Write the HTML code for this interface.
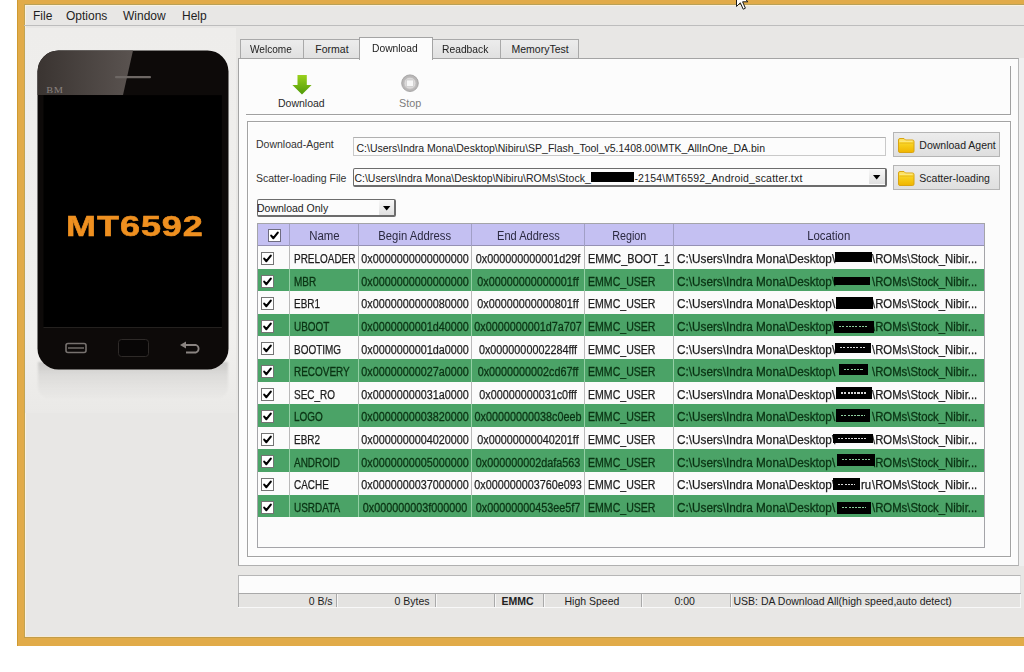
<!DOCTYPE html>
<html><head><meta charset="utf-8">
<style>
*{margin:0;padding:0;box-sizing:border-box}
html,body{width:1024px;height:672px;overflow:hidden;background:#fff;font-family:"Liberation Sans",sans-serif;color:#222}
.a{position:absolute}
.t{position:absolute;white-space:nowrap;line-height:1}
#frame{left:17px;top:0;width:1100px;height:646px;background:#e1ab49;border-left:1px solid #cf9a30}
#win{left:24px;top:4px;width:1001px;height:634px;background:#e8e7e5;border-top:1px solid #b9a158;border-left:1px solid #c2a453;box-shadow:inset 1px 1px 0 #fbf1df}
.menu{font-size:12px;top:10px;color:#1e1e1e}
.tab{top:39px;height:20px;background:linear-gradient(#ececec,#e0e0e0);border:1px solid #a9a9a9;border-bottom:none}
.tabt{font-size:10.5px;top:44px;color:#222;transform-origin:0 0}
.hd{font-size:12px;color:#2b2940;text-align:center;transform-origin:50% 0}
.w{font-size:12px;color:#1c1c1c;transform-origin:0 0;-webkit-text-stroke:0.25px #1c1c1c}
.g{font-size:12px;color:#0a3313;transform-origin:0 0;-webkit-text-stroke:0.3px #0a3313}
.c{text-align:center;transform-origin:50% 0}
.cb{position:absolute;width:12px;height:12px;background:#fff;border:1px solid #707070}
.cb::after{content:"";position:absolute;left:2.5px;top:0px;width:4px;height:7px;border:solid #000;border-width:0 2px 2px 0;transform:rotate(40deg)}
.st{font-size:10.5px;top:596px;color:#222}
</style></head><body>
<div id="frame" class="a"></div>
<div id="win" class="a"></div>
<div class="a" style="left:25px;top:636px;width:1000px;height:1px;background:#f6ead6"></div>
<div class="a" style="left:24px;top:637px;width:1000px;height:1.2px;background:#c39d48"></div>
<!-- menu -->
<div class="a" style="left:24px;top:25px;width:1000px;height:1px;background:#bdbdbd"></div>
<div class="t menu" style="left:33px">File</div>
<div class="t menu" style="left:66px">Options</div>
<div class="t menu" style="left:123px">Window</div>
<div class="t menu" style="left:182px">Help</div>


<!-- phone -->
<div class="a" style="left:25px;top:28px;width:211px;height:385px;background:linear-gradient(#eeedeb,#f1f0ee 80%,#eae9e7)"></div>
<svg class="a" style="left:24px;top:40px" width="215" height="370" viewBox="24 40 215 370">
 <defs>
  <linearGradient id="gl" x1="0" y1="0" x2="1" y2="0">
   <stop offset="0" stop-color="#3a3431"/><stop offset="1" stop-color="#5a5350"/>
  </linearGradient>
  <linearGradient id="sh" x1="0" y1="0" x2="0" y2="1">
   <stop offset="0" stop-color="#d8d7d5"/><stop offset="1" stop-color="#efeeec" stop-opacity="0"/>
  </linearGradient>
 </defs>
 <linearGradient id="sg" x1="0" y1="0" x2="0" y2="1"><stop offset="0" stop-color="#000" stop-opacity="0.16"/><stop offset="0.35" stop-color="#000" stop-opacity="0.07"/><stop offset="1" stop-color="#000" stop-opacity="0"/></linearGradient>
 <filter id="bl" x="-20%" y="-50%" width="140%" height="200%"><feGaussianBlur stdDeviation="1.2"/></filter>
 <path d="M38 362 H228 V384 Q228 400 212 400 H54 Q38 400 38 384 Z" fill="url(#sg)" filter="url(#bl)"/>
 <rect x="37.5" y="50.5" width="191" height="319" rx="21" ry="21" fill="#0d0a09"/>
 <path d="M58.5 50.5 H133 L123 95 H37.5 V71.5 A21 21 0 0 1 58.5 50.5 Z" fill="url(#gl)"/>
 <rect x="43.5" y="95.2" width="178.3" height="232" fill="#000"/>
 <rect x="43.5" y="327.2" width="178.3" height="0.8" fill="#2b2826"/>
 <rect x="115" y="76" width="36" height="2.2" rx="1" fill="#6d6764"/>
 <text x="46.3" y="93.4" font-family="Liberation Serif" font-size="9" fill="#8a8380" letter-spacing="0.4" textLength="17" lengthAdjust="spacingAndGlyphs">BM</text>
 <rect x="66" y="343.5" width="20" height="9" rx="2" fill="none" stroke="#77726f" stroke-width="1.6"/>
 <line x1="68" y1="348" x2="84" y2="348" stroke="#77726f" stroke-width="1.4"/>
 <rect x="118.5" y="339.5" width="30" height="17" rx="3" fill="#080606" stroke="#2e2a28" stroke-width="1"/>
 <path d="M185 345 H196 A4 4 0 0 1 196 352.5 H186" fill="none" stroke="#8a8481" stroke-width="1.8"/>
 <path d="M180 345 L186 341.5 L186 348.5 Z" fill="#8a8481"/>
</svg>
<div class="t" style="left:66px;top:211px;font-size:30px;font-weight:bold;color:#ef9020;letter-spacing:0.8px;transform:scaleX(1.2);transform-origin:0 0;-webkit-text-stroke:0.6px #ef9020">MT6592</div>

<!-- tabs -->
<div class="a tab" style="left:240px;width:64px"></div>
<div class="a tab" style="left:303px;width:57px"></div>
<div class="a tab" style="left:432px;width:69px"></div>
<div class="a tab" style="left:500px;width:79px"></div>
<div class="t tabt" style="left:249.5px;transform:scaleX(0.96)">Welcome</div>
<div class="t tabt" style="left:315.3px;transform:scaleX(1)">Format</div>
<div class="t tabt" style="left:442px;transform:scaleX(0.98)">Readback</div>
<div class="t tabt" style="left:511.5px;transform:scaleX(1)">MemoryTest</div>

<!-- pane -->
<div class="a" style="left:1018px;top:58px;width:6px;height:508px;background:#efefef"></div><div class="a" style="left:238px;top:58px;width:780.5px;height:508px;background:#fcfcfc;border:1px solid #a4a4a4;border-right-color:#b8b8b8;border-bottom-color:#b0b0b0"></div>
<div class="a" style="left:359px;top:37px;width:74px;height:23px;background:#fcfcfc;border:1px solid #a4a4a4;border-bottom:none"></div>
<div class="t tabt" style="left:372.2px;top:43px;transform:scaleX(0.98)">Download</div>


<!-- toolbar -->
<div class="a" style="left:246px;top:114px;width:765px;height:1px;background:#a0a0a0"></div>
<div class="a" style="left:246px;top:115px;width:765px;height:1px;background:#fff"></div>
<div class="a" style="left:1010px;top:66px;width:1px;height:49px;background:#a0a0a0"></div>
<svg class="a" style="left:288px;top:70px" width="30" height="28" viewBox="288 70 30 28">
 <defs><linearGradient id="ga" x1="0" y1="0" x2="0" y2="1"><stop offset="0" stop-color="#9ad11c"/><stop offset="1" stop-color="#4f9a08"/></linearGradient></defs>
 <path d="M297.5 75 H306.8 V85 H311.6 L302 94.5 L292.4 85 H297.5 Z" fill="url(#ga)"/>
</svg>
<div class="t" style="left:278px;top:98px;font-size:10.5px;color:#2a2a2a">Download</div>
<svg class="a" style="left:398px;top:72px" width="24" height="24" viewBox="398 72 24 24">
 <circle cx="410" cy="83.2" r="8.3" fill="#b9b7b7" stroke="#a3a1a1" stroke-width="0.9"/>
 <circle cx="410" cy="83.2" r="6" fill="#dcdada" stroke="#bebcbc" stroke-width="0.8"/>
 <rect x="406.4" y="80" width="7.2" height="6.4" fill="#f7f7f7" stroke="#c4c4c4" stroke-width="0.6"/>
</svg>
<div class="t" style="left:399px;top:98px;font-size:10.8px;color:#7c7c7c">Stop</div>

<!-- groupbox -->
<div class="a" style="left:247px;top:121px;width:764px;height:436px;border:1px solid #a3a3a3;box-shadow:inset 1px 1px 0 #fff, 1px 1px 0 #fff"></div>
<div class="t" style="left:256px;top:139px;font-size:10.5px;color:#333">Download-Agent</div>
<div class="a" style="left:353px;top:137px;width:533px;height:19px;background:#fcfcfc;border:1px solid #c9c9c9;border-top-color:#b0b0b0"></div>
<div class="t" style="left:356.5px;top:143px;font-size:10.5px;color:#222">C:\Users\Indra Mona\Desktop\Nibiru\SP_Flash_Tool_v5.1408.00\MTK_AllInOne_DA.bin</div>
<div class="t" style="left:256px;top:173px;font-size:10.5px;color:#333">Scatter-loading File</div>
<div class="a" style="left:353px;top:168px;width:534px;height:18.5px;background:#fcfcfc;border:1px solid #6c6c6c;border-right-width:2px;border-bottom-width:2px;border-radius:2px"></div>
<div class="t" style="left:354.4px;top:173px;font-size:10.5px;color:#222">C:\Users\Indra Mona\Desktop\Nibiru\ROMs\Stock_</div><div class="a" style="left:591.3px;top:172.2px;width:43px;height:10px;background:#000"></div><div class="t" style="left:634.4px;top:173px;font-size:10.5px;color:#222;letter-spacing:0.22px">-2154\MT6592_Android_scatter.txt</div>
<div class="a" style="left:869px;top:169px;width:16px;height:15px;background:linear-gradient(#f8f8f8,#e0e0e0)"></div>
<svg class="a" style="left:873px;top:175px" width="8" height="5"><path d="M0 0H7.4L3.7 4.4Z" fill="#000"/></svg>

<div class="a" style="left:257px;top:199px;width:138.5px;height:17.5px;background:#fcfcfc;border:1px solid #6c6c6c;border-right-width:2px;border-bottom-width:2px;border-radius:2px"></div>
<div class="t" style="left:257px;top:203px;font-size:10.5px;color:#222">Download Only</div>
<div class="a" style="left:379px;top:200px;width:15px;height:15px;background:linear-gradient(#f8f8f8,#e0e0e0)"></div>
<svg class="a" style="left:382.5px;top:206px" width="8" height="5"><path d="M0 0H7.4L3.7 4.4Z" fill="#000"/></svg>

<div class="a" style="left:893px;top:132px;width:107px;height:25px;background:linear-gradient(#ececec,#dfdfdf);border:1px solid #b5b5b5"></div>
<div class="t" style="left:919.3px;top:140px;font-size:10.5px;color:#222">Download Agent</div>
<div class="a" style="left:893px;top:165px;width:107px;height:25px;background:linear-gradient(#ececec,#dfdfdf);border:1px solid #b5b5b5"></div>
<div class="t" style="left:919.3px;top:173px;font-size:10.5px;color:#222">Scatter-loading</div>
<svg class="a" style="left:897px;top:136.5px" width="19" height="17" viewBox="0 0 19 17"><defs><linearGradient id="fd" x1="0" y1="0" x2="0" y2="1"><stop offset="0" stop-color="#fde46a"/><stop offset="0.45" stop-color="#f7cf1c"/><stop offset="1" stop-color="#f0b400"/></linearGradient></defs><path d="M1.5 3 Q1.5 1.5 3 1.5 H7 L8.5 3 H15.5 Q17 3 17 4.5 V14 Q17 15.5 15.5 15.5 H3 Q1.5 15.5 1.5 14 Z" fill="url(#fd)" stroke="#d9a412" stroke-width="1"/><path d="M2.5 6.2 H16" stroke="#e8b818" stroke-width="0.8"/><path d="M2.5 4.2 H15.5" stroke="#fff2a8" stroke-width="1" opacity="0.8"/></svg>
<svg class="a" style="left:897px;top:170px" width="19" height="17" viewBox="0 0 19 17"><path d="M1.5 3 Q1.5 1.5 3 1.5 H7 L8.5 3 H15.5 Q17 3 17 4.5 V14 Q17 15.5 15.5 15.5 H3 Q1.5 15.5 1.5 14 Z" fill="url(#fd)" stroke="#d9a412" stroke-width="1"/><path d="M2.5 6.2 H16" stroke="#e8b818" stroke-width="0.8"/><path d="M2.5 4.2 H15.5" stroke="#fff2a8" stroke-width="1" opacity="0.8"/></svg>

<!-- table -->
<div class="a" style="left:257px;top:223px;width:728px;height:325px;background:#fbfbfb;border:1px solid #a4a4a8"></div>
<div class="a" style="left:258px;top:224px;width:726px;height:22px;background:#c4c0f2"></div>
<div class="a" style="left:258px;top:245px;width:726px;height:1.5px;background:#9591b4"></div>
<div class="a" style="left:289.0px;top:224px;width:1px;height:22px;background:#a19fc6"></div>
<div class="a" style="left:357.8px;top:224px;width:1px;height:22px;background:#a19fc6"></div>
<div class="a" style="left:471.2px;top:224px;width:1px;height:22px;background:#a19fc6"></div>
<div class="a" style="left:584.0px;top:224px;width:1px;height:22px;background:#a19fc6"></div>
<div class="a" style="left:672.5px;top:224px;width:1px;height:22px;background:#a19fc6"></div>
<svg class="a" style="left:267.5px;top:229px" width="13" height="13" viewBox="0 0 13 13"><rect x="0.5" y="0.5" width="12" height="12" fill="#fff" stroke="#6e6c80"/><path d="M3.2 6.6 L5.4 9.2 L9.8 3.6" fill="none" stroke="#000" stroke-width="2.1" stroke-linecap="round" stroke-linejoin="round"/></svg>
<div class="t hd" style="left:289.5px;width:68.8px;top:229.54px;transform:scaleX(0.95)">Name</div>
<div class="t hd" style="left:358.3px;width:113.4px;top:229.54px;transform:scaleX(0.94)">Begin Address</div>
<div class="t hd" style="left:471.7px;width:112.8px;top:229.54px;transform:scaleX(0.92)">End Address</div>
<div class="t hd" style="left:584.5px;width:88.5px;top:229.54px;transform:scaleX(0.9)">Region</div>
<div class="t hd" style="left:673.0px;width:311.4px;top:229.54px;transform:scaleX(0.95)">Location</div>
<div class="a" style="left:258px;top:246.0px;width:726px;height:22.6px;background:#fbfbfb"></div>
<div class="a" style="left:289.0px;top:246.0px;width:1px;height:22.6px;background:#b9b9b9"></div>
<div class="a" style="left:357.8px;top:246.0px;width:1px;height:22.6px;background:#b9b9b9"></div>
<div class="a" style="left:471.2px;top:246.0px;width:1px;height:22.6px;background:#b9b9b9"></div>
<div class="a" style="left:584.0px;top:246.0px;width:1px;height:22.6px;background:#b9b9b9"></div>
<div class="a" style="left:672.5px;top:246.0px;width:1px;height:22.6px;background:#b9b9b9"></div>
<svg class="a" style="left:260.8px;top:252.0px" width="13" height="13" viewBox="0 0 13 13"><rect x="0.5" y="0.5" width="12" height="12" fill="#fff" stroke="#747474"/><path d="M3.2 6.6 L5.4 9.2 L9.8 3.6" fill="none" stroke="#000" stroke-width="2.1" stroke-linecap="round" stroke-linejoin="round"/></svg>
<div class="t w" style="left:293.6px;top:253.14px;transform:scaleX(0.83)">PRELOADER</div>
<div class="t w c" style="left:314.5px;width:200px;top:253.14px;transform:scaleX(0.9)">0x0000000000000000</div>
<div class="t w c" style="left:428.2px;width:200px;top:253.14px;transform:scaleX(0.9)">0x000000000001d29f</div>
<div class="t w" style="left:587.6px;top:253.14px;transform:scaleX(0.905)">EMMC_BOOT_1</div>
<div class="t w" style="left:677.3px;top:253.14px;transform:scaleX(0.98)">C:\Users\Indra Mona\Desktop\</div>
<div class="t w" style="left:871.7px;top:253.14px;transform:scaleX(0.945)">\ROMs\Stock_Nibir...</div>
<div class="a" style="left:835.2px;top:252.0px;width:36.5px;height:10.0px;background:#000"></div>
<div class="a" style="left:258px;top:268.6px;width:726px;height:22.6px;background:#4ba367"></div>
<div class="a" style="left:289.0px;top:268.6px;width:1px;height:22.6px;background:#93cfa4"></div>
<div class="a" style="left:357.8px;top:268.6px;width:1px;height:22.6px;background:#93cfa4"></div>
<div class="a" style="left:471.2px;top:268.6px;width:1px;height:22.6px;background:#93cfa4"></div>
<div class="a" style="left:584.0px;top:268.6px;width:1px;height:22.6px;background:#93cfa4"></div>
<div class="a" style="left:672.5px;top:268.6px;width:1px;height:22.6px;background:#93cfa4"></div>
<svg class="a" style="left:260.8px;top:274.6px" width="13" height="13" viewBox="0 0 13 13"><rect x="0.5" y="0.5" width="12" height="12" fill="#fff" stroke="#747474"/><path d="M3.2 6.6 L5.4 9.2 L9.8 3.6" fill="none" stroke="#000" stroke-width="2.1" stroke-linecap="round" stroke-linejoin="round"/></svg>
<div class="t g" style="left:293.6px;top:275.74px;transform:scaleX(0.83)">MBR</div>
<div class="t g c" style="left:314.5px;width:200px;top:275.74px;transform:scaleX(0.9)">0x0000000000000000</div>
<div class="t g c" style="left:428.2px;width:200px;top:275.74px;transform:scaleX(0.9)">0x00000000000001ff</div>
<div class="t g" style="left:587.6px;top:275.74px;transform:scaleX(0.88)">EMMC_USER</div>
<div class="t g" style="left:677.3px;top:275.74px;transform:scaleX(0.98)">C:\Users\Indra Mona\Desktop\</div>
<div class="t g" style="left:871.7px;top:275.74px;transform:scaleX(0.945)">\ROMs\Stock_Nibir...</div>
<div class="a" style="left:833.8px;top:277.0px;width:35.8px;height:8.4px;background:#000"></div>
<div class="a" style="left:258px;top:291.2px;width:726px;height:22.6px;background:#fbfbfb"></div>
<div class="a" style="left:289.0px;top:291.2px;width:1px;height:22.6px;background:#b9b9b9"></div>
<div class="a" style="left:357.8px;top:291.2px;width:1px;height:22.6px;background:#b9b9b9"></div>
<div class="a" style="left:471.2px;top:291.2px;width:1px;height:22.6px;background:#b9b9b9"></div>
<div class="a" style="left:584.0px;top:291.2px;width:1px;height:22.6px;background:#b9b9b9"></div>
<div class="a" style="left:672.5px;top:291.2px;width:1px;height:22.6px;background:#b9b9b9"></div>
<svg class="a" style="left:260.8px;top:297.2px" width="13" height="13" viewBox="0 0 13 13"><rect x="0.5" y="0.5" width="12" height="12" fill="#fff" stroke="#747474"/><path d="M3.2 6.6 L5.4 9.2 L9.8 3.6" fill="none" stroke="#000" stroke-width="2.1" stroke-linecap="round" stroke-linejoin="round"/></svg>
<div class="t w" style="left:293.6px;top:298.34px;transform:scaleX(0.83)">EBR1</div>
<div class="t w c" style="left:314.5px;width:200px;top:298.34px;transform:scaleX(0.9)">0x0000000000080000</div>
<div class="t w c" style="left:428.2px;width:200px;top:298.34px;transform:scaleX(0.9)">0x00000000000801ff</div>
<div class="t w" style="left:587.6px;top:298.34px;transform:scaleX(0.88)">EMMC_USER</div>
<div class="t w" style="left:677.3px;top:298.34px;transform:scaleX(0.98)">C:\Users\Indra Mona\Desktop\</div>
<div class="t w" style="left:871.7px;top:298.34px;transform:scaleX(0.945)">\ROMs\Stock_Nibir...</div>
<div class="a" style="left:836.3px;top:296.7px;width:36.4px;height:12.1px;background:#000"></div>
<div class="a" style="left:258px;top:313.8px;width:726px;height:22.6px;background:#4ba367"></div>
<div class="a" style="left:289.0px;top:313.8px;width:1px;height:22.6px;background:#93cfa4"></div>
<div class="a" style="left:357.8px;top:313.8px;width:1px;height:22.6px;background:#93cfa4"></div>
<div class="a" style="left:471.2px;top:313.8px;width:1px;height:22.6px;background:#93cfa4"></div>
<div class="a" style="left:584.0px;top:313.8px;width:1px;height:22.6px;background:#93cfa4"></div>
<div class="a" style="left:672.5px;top:313.8px;width:1px;height:22.6px;background:#93cfa4"></div>
<svg class="a" style="left:260.8px;top:319.8px" width="13" height="13" viewBox="0 0 13 13"><rect x="0.5" y="0.5" width="12" height="12" fill="#fff" stroke="#747474"/><path d="M3.2 6.6 L5.4 9.2 L9.8 3.6" fill="none" stroke="#000" stroke-width="2.1" stroke-linecap="round" stroke-linejoin="round"/></svg>
<div class="t g" style="left:293.6px;top:320.94px;transform:scaleX(0.83)">UBOOT</div>
<div class="t g c" style="left:314.5px;width:200px;top:320.94px;transform:scaleX(0.9)">0x0000000001d40000</div>
<div class="t g c" style="left:428.2px;width:200px;top:320.94px;transform:scaleX(0.9)">0x0000000001d7a707</div>
<div class="t g" style="left:587.6px;top:320.94px;transform:scaleX(0.88)">EMMC_USER</div>
<div class="t g" style="left:677.3px;top:320.94px;transform:scaleX(0.98)">C:\Users\Indra Mona\Desktop\</div>
<div class="t g" style="left:871.7px;top:320.94px;transform:scaleX(0.945)">\ROMs\Stock_Nibir...</div>
<div class="a" style="left:834.2px;top:320.8px;width:40.0px;height:11.9px;background:#000"></div>
<div class="a" style="left:839.2px;top:326.1px;width:30.0px;height:1.2px;background:repeating-linear-gradient(90deg,#8fcf9f 0 2px,transparent 2px 3.3px)"></div>
<div class="a" style="left:258px;top:336.4px;width:726px;height:22.6px;background:#fbfbfb"></div>
<div class="a" style="left:289.0px;top:336.4px;width:1px;height:22.6px;background:#b9b9b9"></div>
<div class="a" style="left:357.8px;top:336.4px;width:1px;height:22.6px;background:#b9b9b9"></div>
<div class="a" style="left:471.2px;top:336.4px;width:1px;height:22.6px;background:#b9b9b9"></div>
<div class="a" style="left:584.0px;top:336.4px;width:1px;height:22.6px;background:#b9b9b9"></div>
<div class="a" style="left:672.5px;top:336.4px;width:1px;height:22.6px;background:#b9b9b9"></div>
<svg class="a" style="left:260.8px;top:342.4px" width="13" height="13" viewBox="0 0 13 13"><rect x="0.5" y="0.5" width="12" height="12" fill="#fff" stroke="#747474"/><path d="M3.2 6.6 L5.4 9.2 L9.8 3.6" fill="none" stroke="#000" stroke-width="2.1" stroke-linecap="round" stroke-linejoin="round"/></svg>
<div class="t w" style="left:293.6px;top:343.54px;transform:scaleX(0.83)">BOOTIMG</div>
<div class="t w c" style="left:314.5px;width:200px;top:343.54px;transform:scaleX(0.9)">0x0000000001da0000</div>
<div class="t w c" style="left:428.2px;width:200px;top:343.54px;transform:scaleX(0.9)">0x0000000002284fff</div>
<div class="t w" style="left:587.6px;top:343.54px;transform:scaleX(0.88)">EMMC_USER</div>
<div class="t w" style="left:677.3px;top:343.54px;transform:scaleX(0.98)">C:\Users\Indra Mona\Desktop\</div>
<div class="t w" style="left:871.7px;top:343.54px;transform:scaleX(0.945)">\ROMs\Stock_Nibir...</div>
<div class="a" style="left:834.6px;top:342.5px;width:36.0px;height:10.0px;background:#000"></div>
<div class="a" style="left:839.6px;top:346.9px;width:26.0px;height:1.2px;background:repeating-linear-gradient(90deg,#d8d8d8 0 2px,transparent 2px 3.3px)"></div>
<div class="a" style="left:258px;top:359.0px;width:726px;height:22.6px;background:#4ba367"></div>
<div class="a" style="left:289.0px;top:359.0px;width:1px;height:22.6px;background:#93cfa4"></div>
<div class="a" style="left:357.8px;top:359.0px;width:1px;height:22.6px;background:#93cfa4"></div>
<div class="a" style="left:471.2px;top:359.0px;width:1px;height:22.6px;background:#93cfa4"></div>
<div class="a" style="left:584.0px;top:359.0px;width:1px;height:22.6px;background:#93cfa4"></div>
<div class="a" style="left:672.5px;top:359.0px;width:1px;height:22.6px;background:#93cfa4"></div>
<svg class="a" style="left:260.8px;top:365.0px" width="13" height="13" viewBox="0 0 13 13"><rect x="0.5" y="0.5" width="12" height="12" fill="#fff" stroke="#747474"/><path d="M3.2 6.6 L5.4 9.2 L9.8 3.6" fill="none" stroke="#000" stroke-width="2.1" stroke-linecap="round" stroke-linejoin="round"/></svg>
<div class="t g" style="left:293.6px;top:366.14px;transform:scaleX(0.83)">RECOVERY</div>
<div class="t g c" style="left:314.5px;width:200px;top:366.14px;transform:scaleX(0.9)">0x00000000027a0000</div>
<div class="t g c" style="left:428.2px;width:200px;top:366.14px;transform:scaleX(0.9)">0x0000000002cd67ff</div>
<div class="t g" style="left:587.6px;top:366.14px;transform:scaleX(0.88)">EMMC_USER</div>
<div class="t g" style="left:677.3px;top:366.14px;transform:scaleX(0.98)">C:\Users\Indra Mona\Desktop\</div>
<div class="t g" style="left:871.7px;top:366.14px;transform:scaleX(0.945)">\ROMs\Stock_Nibir...</div>
<div class="a" style="left:838.8px;top:364.0px;width:29.7px;height:11.4px;background:#000"></div>
<div class="a" style="left:843.8px;top:369.1px;width:19.7px;height:1.2px;background:repeating-linear-gradient(90deg,#8fcf9f 0 2px,transparent 2px 3.3px)"></div>
<div class="a" style="left:258px;top:381.6px;width:726px;height:22.6px;background:#fbfbfb"></div>
<div class="a" style="left:289.0px;top:381.6px;width:1px;height:22.6px;background:#b9b9b9"></div>
<div class="a" style="left:357.8px;top:381.6px;width:1px;height:22.6px;background:#b9b9b9"></div>
<div class="a" style="left:471.2px;top:381.6px;width:1px;height:22.6px;background:#b9b9b9"></div>
<div class="a" style="left:584.0px;top:381.6px;width:1px;height:22.6px;background:#b9b9b9"></div>
<div class="a" style="left:672.5px;top:381.6px;width:1px;height:22.6px;background:#b9b9b9"></div>
<svg class="a" style="left:260.8px;top:387.6px" width="13" height="13" viewBox="0 0 13 13"><rect x="0.5" y="0.5" width="12" height="12" fill="#fff" stroke="#747474"/><path d="M3.2 6.6 L5.4 9.2 L9.8 3.6" fill="none" stroke="#000" stroke-width="2.1" stroke-linecap="round" stroke-linejoin="round"/></svg>
<div class="t w" style="left:293.6px;top:388.74px;transform:scaleX(0.83)">SEC_RO</div>
<div class="t w c" style="left:314.5px;width:200px;top:388.74px;transform:scaleX(0.9)">0x00000000031a0000</div>
<div class="t w c" style="left:428.2px;width:200px;top:388.74px;transform:scaleX(0.9)">0x00000000031c0fff</div>
<div class="t w" style="left:587.6px;top:388.74px;transform:scaleX(0.88)">EMMC_USER</div>
<div class="t w" style="left:677.3px;top:388.74px;transform:scaleX(0.98)">C:\Users\Indra Mona\Desktop\</div>
<div class="t w" style="left:871.7px;top:388.74px;transform:scaleX(0.945)">\ROMs\Stock_Nibir...</div>
<div class="a" style="left:836.3px;top:387.3px;width:35.7px;height:11.5px;background:#000"></div>
<div class="a" style="left:841.3px;top:392.4px;width:25.7px;height:1.2px;background:repeating-linear-gradient(90deg,#d8d8d8 0 2px,transparent 2px 3.3px)"></div>
<div class="a" style="left:258px;top:404.2px;width:726px;height:22.6px;background:#4ba367"></div>
<div class="a" style="left:289.0px;top:404.2px;width:1px;height:22.6px;background:#93cfa4"></div>
<div class="a" style="left:357.8px;top:404.2px;width:1px;height:22.6px;background:#93cfa4"></div>
<div class="a" style="left:471.2px;top:404.2px;width:1px;height:22.6px;background:#93cfa4"></div>
<div class="a" style="left:584.0px;top:404.2px;width:1px;height:22.6px;background:#93cfa4"></div>
<div class="a" style="left:672.5px;top:404.2px;width:1px;height:22.6px;background:#93cfa4"></div>
<svg class="a" style="left:260.8px;top:410.2px" width="13" height="13" viewBox="0 0 13 13"><rect x="0.5" y="0.5" width="12" height="12" fill="#fff" stroke="#747474"/><path d="M3.2 6.6 L5.4 9.2 L9.8 3.6" fill="none" stroke="#000" stroke-width="2.1" stroke-linecap="round" stroke-linejoin="round"/></svg>
<div class="t g" style="left:293.6px;top:411.34px;transform:scaleX(0.83)">LOGO</div>
<div class="t g c" style="left:314.5px;width:200px;top:411.34px;transform:scaleX(0.9)">0x0000000003820000</div>
<div class="t g c" style="left:428.2px;width:200px;top:411.34px;transform:scaleX(0.9)">0x00000000038c0eeb</div>
<div class="t g" style="left:587.6px;top:411.34px;transform:scaleX(0.88)">EMMC_USER</div>
<div class="t g" style="left:677.3px;top:411.34px;transform:scaleX(0.98)">C:\Users\Indra Mona\Desktop\</div>
<div class="t g" style="left:871.7px;top:411.34px;transform:scaleX(0.945)">\ROMs\Stock_Nibir...</div>
<div class="a" style="left:836.3px;top:409.2px;width:33.7px;height:12.5px;background:#000"></div>
<div class="a" style="left:841.3px;top:414.8px;width:23.7px;height:1.2px;background:repeating-linear-gradient(90deg,#8fcf9f 0 2px,transparent 2px 3.3px)"></div>
<div class="a" style="left:258px;top:426.8px;width:726px;height:22.6px;background:#fbfbfb"></div>
<div class="a" style="left:289.0px;top:426.8px;width:1px;height:22.6px;background:#b9b9b9"></div>
<div class="a" style="left:357.8px;top:426.8px;width:1px;height:22.6px;background:#b9b9b9"></div>
<div class="a" style="left:471.2px;top:426.8px;width:1px;height:22.6px;background:#b9b9b9"></div>
<div class="a" style="left:584.0px;top:426.8px;width:1px;height:22.6px;background:#b9b9b9"></div>
<div class="a" style="left:672.5px;top:426.8px;width:1px;height:22.6px;background:#b9b9b9"></div>
<svg class="a" style="left:260.8px;top:432.8px" width="13" height="13" viewBox="0 0 13 13"><rect x="0.5" y="0.5" width="12" height="12" fill="#fff" stroke="#747474"/><path d="M3.2 6.6 L5.4 9.2 L9.8 3.6" fill="none" stroke="#000" stroke-width="2.1" stroke-linecap="round" stroke-linejoin="round"/></svg>
<div class="t w" style="left:293.6px;top:433.94px;transform:scaleX(0.83)">EBR2</div>
<div class="t w c" style="left:314.5px;width:200px;top:433.94px;transform:scaleX(0.9)">0x0000000004020000</div>
<div class="t w c" style="left:428.2px;width:200px;top:433.94px;transform:scaleX(0.9)">0x00000000040201ff</div>
<div class="t w" style="left:587.6px;top:433.94px;transform:scaleX(0.88)">EMMC_USER</div>
<div class="t w" style="left:677.3px;top:433.94px;transform:scaleX(0.98)">C:\Users\Indra Mona\Desktop\</div>
<div class="t w" style="left:871.7px;top:433.94px;transform:scaleX(0.945)">\ROMs\Stock_Nibir...</div>
<div class="a" style="left:833.0px;top:434.2px;width:39.7px;height:9.3px;background:#000"></div>
<div class="a" style="left:838.0px;top:438.2px;width:29.7px;height:1.2px;background:repeating-linear-gradient(90deg,#d8d8d8 0 2px,transparent 2px 3.3px)"></div>
<div class="a" style="left:258px;top:449.4px;width:726px;height:22.6px;background:#4ba367"></div>
<div class="a" style="left:289.0px;top:449.4px;width:1px;height:22.6px;background:#93cfa4"></div>
<div class="a" style="left:357.8px;top:449.4px;width:1px;height:22.6px;background:#93cfa4"></div>
<div class="a" style="left:471.2px;top:449.4px;width:1px;height:22.6px;background:#93cfa4"></div>
<div class="a" style="left:584.0px;top:449.4px;width:1px;height:22.6px;background:#93cfa4"></div>
<div class="a" style="left:672.5px;top:449.4px;width:1px;height:22.6px;background:#93cfa4"></div>
<svg class="a" style="left:260.8px;top:455.4px" width="13" height="13" viewBox="0 0 13 13"><rect x="0.5" y="0.5" width="12" height="12" fill="#fff" stroke="#747474"/><path d="M3.2 6.6 L5.4 9.2 L9.8 3.6" fill="none" stroke="#000" stroke-width="2.1" stroke-linecap="round" stroke-linejoin="round"/></svg>
<div class="t g" style="left:293.6px;top:456.54px;transform:scaleX(0.83)">ANDROID</div>
<div class="t g c" style="left:314.5px;width:200px;top:456.54px;transform:scaleX(0.9)">0x0000000005000000</div>
<div class="t g c" style="left:428.2px;width:200px;top:456.54px;transform:scaleX(0.9)">0x000000002dafa563</div>
<div class="t g" style="left:587.6px;top:456.54px;transform:scaleX(0.88)">EMMC_USER</div>
<div class="t g" style="left:677.3px;top:456.54px;transform:scaleX(0.98)">C:\Users\Indra Mona\Desktop\</div>
<div class="t g" style="left:871.7px;top:456.54px;transform:scaleX(0.945)">\ROMs\Stock_Nibir...</div>
<div class="a" style="left:837.3px;top:454.0px;width:38.1px;height:11.8px;background:#000"></div>
<div class="a" style="left:842.3px;top:459.3px;width:28.1px;height:1.2px;background:repeating-linear-gradient(90deg,#8fcf9f 0 2px,transparent 2px 3.3px)"></div>
<div class="a" style="left:258px;top:472.0px;width:726px;height:22.6px;background:#fbfbfb"></div>
<div class="a" style="left:289.0px;top:472.0px;width:1px;height:22.6px;background:#b9b9b9"></div>
<div class="a" style="left:357.8px;top:472.0px;width:1px;height:22.6px;background:#b9b9b9"></div>
<div class="a" style="left:471.2px;top:472.0px;width:1px;height:22.6px;background:#b9b9b9"></div>
<div class="a" style="left:584.0px;top:472.0px;width:1px;height:22.6px;background:#b9b9b9"></div>
<div class="a" style="left:672.5px;top:472.0px;width:1px;height:22.6px;background:#b9b9b9"></div>
<svg class="a" style="left:260.8px;top:478.0px" width="13" height="13" viewBox="0 0 13 13"><rect x="0.5" y="0.5" width="12" height="12" fill="#fff" stroke="#747474"/><path d="M3.2 6.6 L5.4 9.2 L9.8 3.6" fill="none" stroke="#000" stroke-width="2.1" stroke-linecap="round" stroke-linejoin="round"/></svg>
<div class="t w" style="left:293.6px;top:479.14px;transform:scaleX(0.83)">CACHE</div>
<div class="t w c" style="left:314.5px;width:200px;top:479.14px;transform:scaleX(0.9)">0x0000000037000000</div>
<div class="t w c" style="left:428.2px;width:200px;top:479.14px;transform:scaleX(0.9)">0x000000003760e093</div>
<div class="t w" style="left:587.6px;top:479.14px;transform:scaleX(0.88)">EMMC_USER</div>
<div class="t w" style="left:677.3px;top:479.14px;transform:scaleX(0.98)">C:\Users\Indra Mona\Desktop\</div>
<div class="t w" style="left:871.7px;top:479.14px;transform:scaleX(0.945)">\ROMs\Stock_Nibir...</div>
<div class="a" style="left:832.5px;top:478.0px;width:27.1px;height:12.4px;background:#000"></div>
<div class="a" style="left:837.5px;top:483.6px;width:17.1px;height:1.2px;background:repeating-linear-gradient(90deg,#d8d8d8 0 2px,transparent 2px 3.3px)"></div>
<div class="t w" style="left:861px;top:479.14px;transform:scaleX(0.945)">ru</div>
<div class="a" style="left:258px;top:494.6px;width:726px;height:22.6px;background:#4ba367"></div>
<div class="a" style="left:289.0px;top:494.6px;width:1px;height:22.6px;background:#93cfa4"></div>
<div class="a" style="left:357.8px;top:494.6px;width:1px;height:22.6px;background:#93cfa4"></div>
<div class="a" style="left:471.2px;top:494.6px;width:1px;height:22.6px;background:#93cfa4"></div>
<div class="a" style="left:584.0px;top:494.6px;width:1px;height:22.6px;background:#93cfa4"></div>
<div class="a" style="left:672.5px;top:494.6px;width:1px;height:22.6px;background:#93cfa4"></div>
<svg class="a" style="left:260.8px;top:500.6px" width="13" height="13" viewBox="0 0 13 13"><rect x="0.5" y="0.5" width="12" height="12" fill="#fff" stroke="#747474"/><path d="M3.2 6.6 L5.4 9.2 L9.8 3.6" fill="none" stroke="#000" stroke-width="2.1" stroke-linecap="round" stroke-linejoin="round"/></svg>
<div class="t g" style="left:293.6px;top:501.74px;transform:scaleX(0.83)">USRDATA</div>
<div class="t g c" style="left:314.5px;width:200px;top:501.74px;transform:scaleX(0.9)">0x000000003f000000</div>
<div class="t g c" style="left:428.2px;width:200px;top:501.74px;transform:scaleX(0.9)">0x00000000453ee5f7</div>
<div class="t g" style="left:587.6px;top:501.74px;transform:scaleX(0.88)">EMMC_USER</div>
<div class="t g" style="left:677.3px;top:501.74px;transform:scaleX(0.98)">C:\Users\Indra Mona\Desktop\</div>
<div class="t g" style="left:871.7px;top:501.74px;transform:scaleX(0.945)">\ROMs\Stock_Nibir...</div>
<div class="a" style="left:837.3px;top:501.9px;width:34.0px;height:11.9px;background:#000"></div>
<div class="a" style="left:842.3px;top:507.2px;width:24.0px;height:1.2px;background:repeating-linear-gradient(90deg,#8fcf9f 0 2px,transparent 2px 3.3px)"></div>
<!-- /table -->

<!-- status -->
<div class="a" style="left:238px;top:574.5px;width:783px;height:19.5px;background:#fcfcfc;border:1px solid #b6b6b6;border-bottom:none;border-right-color:#e0e0e0"></div>
<div class="a" style="left:238px;top:593px;width:783px;height:14.5px;background:#e4e3e1;border-top:1px solid #a9a9a9;border-left:1px solid #a9a9a9"></div>
<div class="a" style="left:238px;top:607px;width:783px;height:1px;background:#f8f8f8"></div>
<div class="a" style="left:336px;top:594px;width:1px;height:13px;background:#a9a9a9"></div>
<div class="a" style="left:337px;top:594px;width:1px;height:13px;background:#f6f6f6"></div>
<div class="a" style="left:435px;top:594px;width:1px;height:13px;background:#a9a9a9"></div>
<div class="a" style="left:436px;top:594px;width:1px;height:13px;background:#f6f6f6"></div>
<div class="a" style="left:494px;top:594px;width:1px;height:13px;background:#a9a9a9"></div>
<div class="a" style="left:495px;top:594px;width:1px;height:13px;background:#f6f6f6"></div>
<div class="a" style="left:543px;top:594px;width:1px;height:13px;background:#a9a9a9"></div>
<div class="a" style="left:544px;top:594px;width:1px;height:13px;background:#f6f6f6"></div>
<div class="a" style="left:641px;top:594px;width:1px;height:13px;background:#a9a9a9"></div>
<div class="a" style="left:642px;top:594px;width:1px;height:13px;background:#f6f6f6"></div>
<div class="a" style="left:730px;top:594px;width:1px;height:13px;background:#a9a9a9"></div>
<div class="a" style="left:731px;top:594px;width:1px;height:13px;background:#f6f6f6"></div>
<div class="a" style="left:1020px;top:594px;width:1px;height:13px;background:#f6f6f6"></div>
<div class="t st" style="left:308.7px">0 B/s</div>
<div class="t st" style="left:394.5px">0 Bytes</div>
<div class="t st" style="left:501.5px;font-weight:bold">EMMC</div>
<div class="t st" style="left:564.5px">High Speed</div>
<div class="t st" style="left:674.5px">0:00</div>
<div class="t st" style="left:733.5px">USB: DA Download All(high speed,auto detect)</div>
<!-- cursor -->
<svg class="a" style="left:730px;top:0" width="22" height="14" viewBox="730 0 22 14">
 <path d="M736.5 -9.5 V6.5 L740.3 2.8 L743.2 9.2 L745.4 8.2 L742.6 1.8 L748 1.8 Z" fill="#fff" stroke="#1a1a1a" stroke-width="1" stroke-linejoin="round"/>
</svg>

</body></html>
